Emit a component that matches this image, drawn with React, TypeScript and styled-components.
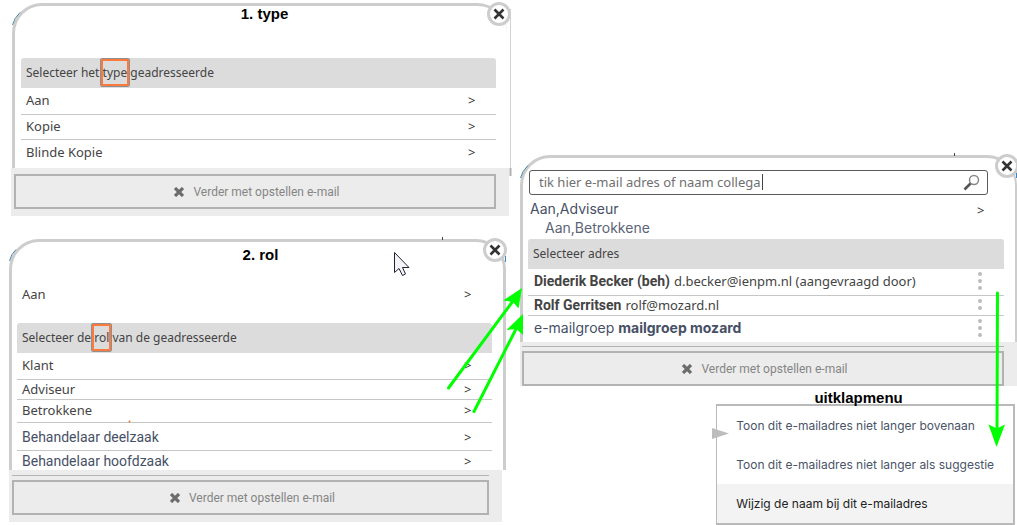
import React from "react";
import styled, { createGlobalStyle, css } from "styled-components";

const humanist = `"Noto Sans", "Open Sans", sans-serif`;
const grotesk = `Inter, Roboto, sans-serif`;
const line = "#c6c6c6";

const GlobalStyle = createGlobalStyle`
  * { box-sizing: border-box; }
  body { margin: 0; background: #fff; color: #444; font: 12px/16px ${humanist}; }
  h2, p, ul { margin: 0; padding: 0; }
  ul { list-style: none; }
  button { font: inherit; color: inherit; background: none; border: 0; padding: 0; text-align: left; cursor: pointer; }
`;

const Page = styled.main`
  position: relative;
  display: grid;
  grid-template-columns: 502fr 498fr;
  column-gap: 8px;
  padding: 3px 0 0 9px;
`;

const Column = styled.div<{ $top?: number }>`
  display: flex;
  flex-direction: column;
  gap: 23px;
  min-width: 0;
  padding-top: ${(p) => p.$top ?? 0}px;
`;

const Panel = styled.section<{ $left?: number; $right?: number }>`
  margin: 0 ${(p) => p.$right ?? 0}px 0 ${(p) => p.$left ?? 0}px;
`;

const PanelBody = styled.div<{ $open?: boolean; $thin?: boolean; $pad: string; $margin?: string }>`
  position: relative;
  display: flow-root;
  margin: ${(p) => p.$margin ?? "0"};
  padding: ${(p) => p.$pad};
  border: 3px solid #cdcdcd;
  border-bottom: 0;
  border-right-width: ${(p) => (p.$open ? 0 : p.$thin ? 2 : 3)}px;
  border-radius: 30px 30px 0 0;
`;

const Title = styled.h2`
  padding-left: 12px;
  text-align: center;
  color: #000;
  font: bold 15px/16px "Liberation Sans", Arial, sans-serif;
`;

const CloseButton = styled.button`
  position: absolute;
  top: -4px;
  right: -4px;
  display: grid;
  place-items: center;
  width: 24px;
  height: 24px;
  border: 3px solid #cdcdcd;
  border-radius: 50%;
  background: #fff;
`;

const Bar = styled.p<{ $top?: number }>`
  margin-top: ${(p) => p.$top ?? 0}px;
  padding: 7px 5px;
  border-radius: 3px 3px 0 0;
  background: #dcdcdc;
`;

const Marked = styled.span`
  position: relative;
  &::after {
    content: "";
    position: absolute;
    inset: -5px -2px;
    border: 2px solid #fb7a3c;
    outline: 1px solid #8f8f8f;
    border-radius: 1px;
  }
`;

const Row = styled.button<{ $height: number; $modern?: boolean; $last?: boolean }>`
  display: flex;
  align-items: center;
  width: 100%;
  height: ${(p) => p.$height}px;
  padding: 0 19px 2px 5px;
  border-bottom: ${(p) => (p.$last ? 0 : 1)}px solid ${line};
  font-size: 13px;
  ${(p) =>
    p.$modern &&
    css`
      padding-bottom: 0;
      font-family: Roboto, sans-serif;
      font-size: 14px;
      color: #475066;
    `}
`;

const CurrentRow = styled(Row).attrs({ as: "div" })`
  padding-top: 4px;
`;

const Label = styled.span`
  flex: 1;
`;

const Chevron = styled.span`
  width: 9px;
  font: 13px/14px ${humanist};
  color: #333;
`;

const ChoiceList = styled.ul<{ $bottom?: number }>`
  padding-bottom: ${(p) => p.$bottom ?? 0}px;
`;

const Footer = styled.div<{ $pad: string; $margin?: string }>`
  margin: ${(p) => p.$margin ?? "0"};
  padding: ${(p) => p.$pad};
  background: #ececec;
`;

const FooterRule = styled.div`
  height: 1px;
  margin-bottom: 4px;
  background: #b4b4b4;
`;

const ContinueButton = styled.button`
  display: flex;
  align-items: center;
  justify-content: center;
  gap: 9px;
  width: 100%;
  height: 35px;
  padding-left: 4px;
  border: 2px solid #b2b2b2;
  color: #858585;
  font: 12px/16px Roboto, sans-serif;
`;

const SearchBox = styled.label`
  display: flex;
  align-items: center;
  height: 25px;
  margin: 0 16px 0 1px;
  padding: 0 7px 0 9px;
  border: 1px solid #5a5a5a;
  border-radius: 3px;
  background: #fff;
`;

const SearchInput = styled.input`
  flex: 1;
  min-width: 0;
  padding: 0 0 2px;
  border: 0;
  outline: 0;
  background: none;
  color: #707070;
  font: 13px/16px ${humanist};
`;

const Recipients = styled.div`
  display: flex;
  align-items: flex-start;
  padding: 4px 18px 2px 2px;
  color: #475066;
  font: 14px/19px ${grotesk};

  ${Chevron} { margin-top: 4px; }
`;

const RecipientNames = styled.ul`
  flex: 1;
  li + li { padding-left: 15px; color: #5c6478; }
`;

const Contact = styled.li<{ $height: number; $modern?: boolean; $last?: boolean }>`
  display: flex;
  align-items: center;
  gap: 4px;
  height: ${(p) => p.$height}px;
  padding: 0 22px 2px 6px;
  border-bottom: ${(p) => (p.$last ? 0 : 1)}px solid ${line};
  font-size: 13px;
  b { font-family: Roboto, sans-serif; font-size: 14px; }
  ${(p) =>
    p.$modern &&
    css`
      &, b { font-family: ${grotesk}; }
      font-size: 14px;
      color: #475066;
    `}
`;

const Dots = styled.button`
  display: grid;
  gap: 3px;
  margin-left: auto;
`;

const Dot = styled.i`
  width: 4px;
  height: 4px;
  border-radius: 50%;
  background: #bcbcbc;
`;

const MenuArea = styled.section`
  width: 60%;
  margin: -19px 2px 0 auto;
`;

const MenuTitle = styled(Title)`
  padding: 0 14px 0 0;
  height: 14px;
`;

const Menu = styled.ul`
  border: 2px solid #b9b9b9;
  border-left-width: 1px;
`;

const MenuItem = styled.button<{ $active?: boolean }>`
  width: 100%;
  height: 39px;
  padding: 0 0 0 19px;
  background: ${(p) => (p.$active ? "#f3f3f3" : "#fff")};
  color: ${(p) => (p.$active ? "#222" : "#4a5468")};
  font: 12px/16px ${grotesk};
  white-space: nowrap;
`;

const Annotations = styled.svg`
  position: absolute;
  top: 0;
  left: 0;
  pointer-events: none;
`;

function Close() {
  return (
    <CloseButton aria-label="Sluiten">
      <svg width="12" height="12" viewBox="0 0 12 12" stroke="#333" strokeWidth="2.6">
        <path d="M1.5 1.5 10.5 10.5M10.5 1.5 1.5 10.5" />
      </svg>
    </CloseButton>
  );
}

function Continue() {
  return (
    <ContinueButton>
      <svg width="10" height="10" viewBox="0 0 10 10" stroke="#6c6c6c" strokeWidth="3.2">
        <path d="M1 1 9 9M9 1 1 9" />
      </svg>
      Verder met opstellen e-mail
    </ContinueButton>
  );
}

function Choice(props: { text: string; height: number; modern?: boolean; last?: boolean }) {
  return (
    <li>
      <Row $height={props.height} $modern={props.modern} $last={props.last}>
        <Label>{props.text}</Label>
        <Chevron>&gt;</Chevron>
      </Row>
    </li>
  );
}

function More({ count = 3 }: { count?: number }) {
  return (
    <Dots aria-label="Meer">
      {Array.from({ length: count }, (_, i) => (
        <Dot key={i} />
      ))}
    </Dots>
  );
}

export default function App() {
  return (
    <>
      <GlobalStyle />
      <Page>
        <Column>
          <Panel $left={2}>
            <PanelBody $open $pad="0 11px 0 6px" $margin="0 4px 0 1px">
              <Title>1. type</Title>
              <Close />
              <Bar $top={36}>
                Selecteer het <Marked>type</Marked> geadresseerde
              </Bar>
              <ChoiceList $bottom={3}>
                <Choice text="Aan" height={27} />
                <Choice text="Kopie" height={25} />
                <Choice text="Blinde Kopie" height={25} last />
              </ChoiceList>
            </PanelBody>
            <Footer $pad="6px 13px 7px 3px" $margin="0 2px 0 0">
              <Continue />
            </Footer>
          </Panel>

          <Panel $right={5}>
            <PanelBody $pad="5px 11px 0 5px">
              <Title>2. rol</Title>
              <Close />
              <CurrentRow $height={60} $last>
                <Label>Aan</Label>
                <Chevron>&gt;</Chevron>
              </CurrentRow>
              <Bar>
                Selecteer de <Marked>rol</Marked> van de geadresseerde
              </Bar>
              <ChoiceList>
                <Choice text="Klant" height={27} />
                <Choice text="Adviseur" height={20} />
                <Choice text="Betrokkene" height={23} />
                <Choice text="Behandelaar deelzaak" height={28} modern />
                <Choice text="Behandelaar hoofdzaak" height={19} modern last />
              </ChoiceList>
            </PanelBody>
            <Footer $pad="5px 13px 7px 3px" $margin="0 4px 0 0">
              <FooterRule />
              <Continue />
            </Footer>
          </Panel>
        </Column>

        <Column $top={152}>
          <Panel $left={1}>
            <PanelBody $thin $pad="12px 11px 0 5px">
              <Close />
              <SearchBox>
                <SearchInput aria-label="Zoek adres" defaultValue="tik hier e-mail adres of naam collega" />
                <svg width="17" height="17" viewBox="0 0 17 17" fill="none">
                  <circle cx="11" cy="6" r="4.5" stroke="#888" strokeWidth="1.5" />
                  <path d="M7.5 9.5 1.5 15.5" stroke="#555" strokeWidth="2.6" />
                </svg>
              </SearchBox>
              <Recipients>
                <RecipientNames>
                  <li>Aan,Adviseur</li>
                  <li>Aan,Betrokkene</li>
                </RecipientNames>
                <Chevron>&gt;</Chevron>
              </Recipients>
              <Bar>Selecteer adres</Bar>
              <ul>
                <Contact $height={27}>
                  <b>Diederik Becker (beh)</b> d.becker@ienpm.nl (aangevraagd door)
                  <More />
                </Contact>
                <Contact $height={20}>
                  <b>Rolf Gerritsen</b> rolf@mozard.nl
                  <More count={2} />
                </Contact>
                <Contact $height={26} $modern $last>
                  e-mailgroep <b>mailgroep mozard</b>
                  <More />
                </Contact>
              </ul>
            </PanelBody>
            <Footer $pad="4px 13px 0 2px">
              <FooterRule />
              <Continue />
            </Footer>
          </Panel>

          <MenuArea>
            <MenuTitle>uitklapmenu</MenuTitle>
            <Menu>
              <li><MenuItem>Toon dit e-mailadres niet langer bovenaan</MenuItem></li>
              <li><MenuItem>Toon dit e-mailadres niet langer als suggestie</MenuItem></li>
              <li><MenuItem $active>Wijzig de naam bij dit e-mailadres</MenuItem></li>
            </Menu>
          </MenuArea>
        </Column>

        <Annotations width="1017" height="525" viewBox="0 0 1017 525" aria-hidden="true">
          <path d="M510.5 9V168" stroke="#d2d2d2" />
          <path d="M510.5 168V176" stroke="#b0b0b0" strokeWidth="2" />
          <path d="M12.5 25Q14 18 20 12.5M9.5 261Q11 254 16 249.5M520.5 178Q522 171 528 165.5" stroke="#4a86a8" fill="none" />
          <path d="M442.5 237V240M954.5 153V156" stroke="#444" />
          <path d="M505.5 256V262M1016.5 173V178" stroke="#3f86c0" />
          <path d="M762.5 174V190" stroke="#444" />
          <path d="M712 428 729 433.5 712 439Z" fill="#bdbdbd" />
          <circle cx="129.5" cy="421.5" r="1" fill="#e0783c" />
          <g stroke="#00ff00" strokeWidth="3" fill="none" strokeLinecap="round">
            <path d="M448.5 388 513 301M474 411.5 517 327M997.5 293 997 432" />
          </g>
          <g fill="#00ff00">
            <path d="M522 288 518.5 308.5 513 302 503 300.5Z" />
            <path d="M523 314 523 335 516.5 329 506.5 330Z" />
            <path d="M996.5 447 988.5 424.5 997 428.5 1005 424.5Z" />
          </g>
          <path d="M394.5 252.5V272.5L399 268.5 402.5 275.5 405.5 274 402.5 267.5H409Z" fill="#f4f4f8" stroke="#223" />
        </Annotations>
      </Page>
    </>
  );
}
